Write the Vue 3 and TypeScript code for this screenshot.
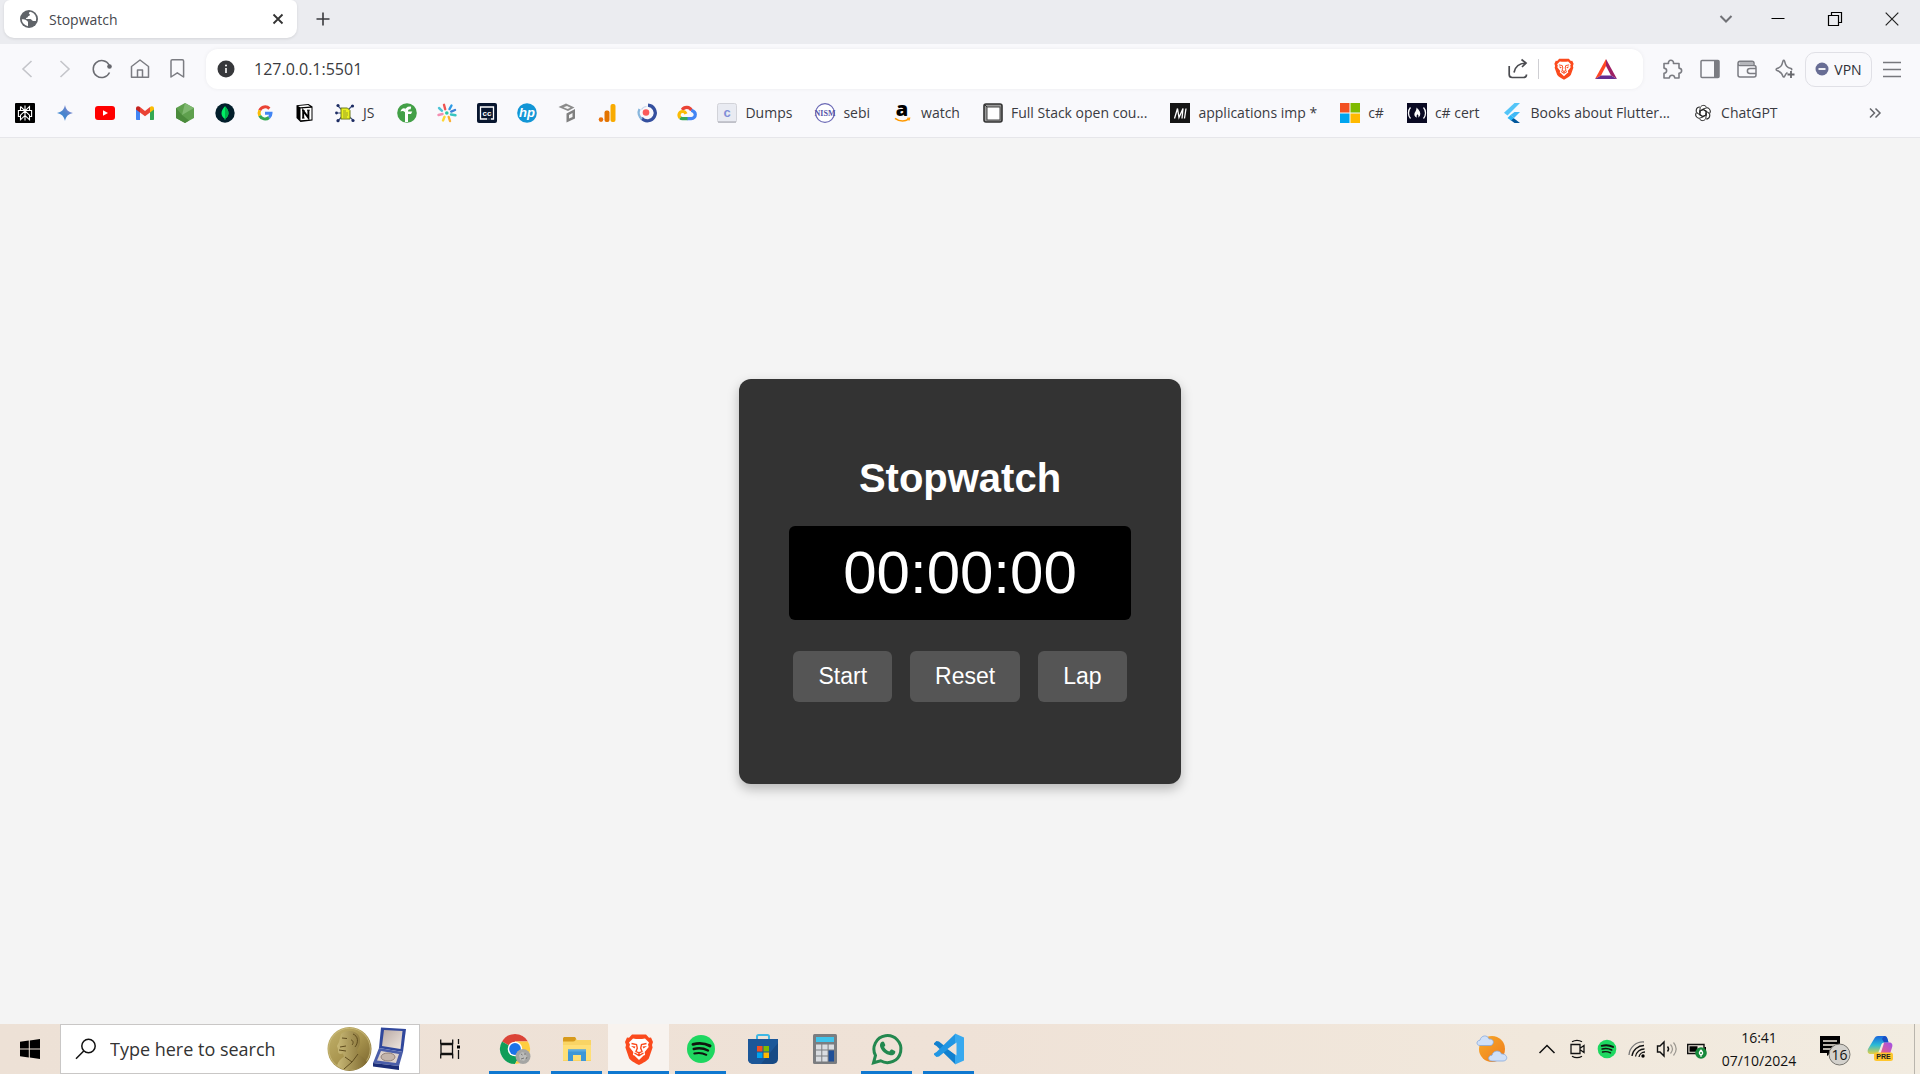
<script setup lang="ts">
import { computed, onBeforeUnmount, ref } from 'vue'

interface Bookmark {
  icon: string
  label?: string
  name: string
}

interface TaskApp {
  icon: string
  name: string
  running: boolean
  active?: boolean
}

const svg: Record<string, string> = {
  perplexity:
    '<rect width="20" height="20" rx="1" fill="#000"/><g fill="none" stroke="#fff" stroke-width="1.1"><path d="M10 2.5v15M5.5 3.5V7.5H14.5V3.5L10 7.8 5.5 3.5M10 7.8l-4.5 4.4v4.6L10 12.4l4.5 4.4v-4.6L10 7.8M5.5 7.5H3.4v6h2.1M14.5 7.5h2.1v6h-2.1"/></g>',
  gemini:
    '<defs><linearGradient id="gm" x1="0" y1="1" x2="1" y2="0"><stop offset="0" stop-color="#2f8fd8"/><stop offset=".5" stop-color="#4d84cc"/><stop offset="1" stop-color="#a18bd0"/></linearGradient></defs><path d="M10 2c.8 4.500 3.500 7.200 8 8-4.500.8-7.200 3.500-8 8-.8-4.500-3.500-7.200-8-8 4.500-.8 7.200-3.500 8-8z" fill="url(#gm)"/>',
  youtube: '<rect y="3" width="20" height="14" rx="3" fill="#f00"/><path d="M8 7.2v5.6l5-2.8z" fill="#fff"/>',
  gmail:
    '<path d="M1 5.500V16c0 .6.400 1 1 1h3V8z" fill="#4285f4"/><path d="M15 8v9h3c.6 0 1-.4 1-1V5.500z" fill="#34a853"/><path d="M1 5.500C1 3 3.500 2.600 5 4v5.500L1 6.600z" fill="#c5221f"/><path d="M5 4l5 4 5-4v5.500l-5 3.800-5-3.800z" fill="#ea4335"/><path d="M15 4c1.500-1.400 4-1 4 1.500v1.100L15 9.500z" fill="#fbbc04"/>',
  node: '<path d="M10 0l9 5v10l-9 5-9-5V5z" fill="#5fa04e"/><path d="M10 0l9 5-12 7z" fill="#7fb870"/><path d="M7 12L1 5v10l9 5 4-2.5z" fill="#4b8b3c"/>',
  mongo:
    '<circle cx="10" cy="10" r="9.7" fill="#021e2b"/><path d="M10 3.2c2.300 2.300 3.600 4.400 3.500 7-.1 2.500-1.500 4.300-3.200 5.600V17h-.6v-1.200c-1.800-1.300-3.200-3.100-3.200-5.600 0-2.600 1.300-4.700 3.500-7z" fill="#00ed64"/><path d="M10 3.2c2.300 2.300 3.600 4.400 3.500 7-.1 2.500-1.500 4.300-3.500 5.600z" fill="#00b24a"/>',
  google:
    '<g fill="none" stroke-width="3"><path d="M14.400 5.600A6 6 0 0 0 4.700 7.300" stroke="#ea4335"/><path d="M4.700 7.300a6 6 0 0 0 0 5.400" stroke="#fbbc05"/><path d="M4.700 12.700a6 6 0 0 0 9.300 1.800" stroke="#34a853"/><path d="M14 14.500a5.800 5.800 0 0 0 2-4.300h-6" stroke="#4285f4"/></g>',
  notion:
    '<path d="M1.500 2.200L13.500 1l4 2.600v14L5.500 19l-4-4z" fill="#000"/><path d="M3 2.900l10-.9 2.300 1.500-10 .8z" fill="#fff"/><path d="M5.500 5.600l11-.8v11.600l-11 .9z" fill="#fff"/><path d="M8.200 15V7.700l5.200 7.200V7.300" fill="none" stroke="#000" stroke-width="1.9"/><path d="M7 7.600h2.600M7 15.100h2.500M12 7.200h2.800" stroke="#000"/>',
  jsnet:
    '<g stroke="#3c4f80" stroke-width="1.200"><path d="M10 10L3 3M10 10l7-7M10 10H1M10 10l-7 8M10 10l8 7"/></g><g fill="#1c2b62"><circle cx="3" cy="2.500" r="1.600"/><circle cx="17.500" cy="3" r="1.600"/><circle cx="1.500" cy="10" r="1.400"/><circle cx="3" cy="17.700" r="1.600"/><circle cx="18" cy="17.500" r="1.600"/></g><path d="M6 5h6.500L15 7.500V16H6z" fill="#eaf01e" stroke="#6d7b1d"/><path d="M8 8h3M8 10h5M8 12h5M8 14h4" stroke="#9aa12a"/>',
  leafCircle:
    '<circle cx="10" cy="10" r="9.800" fill="#43a047"/><path d="M8 19V9c0-3.800 2-5.800 6.200-5.300l-.6 2.700c-1.700-.3-2.600.4-2.600 2.100h4.300L14 11h-3v8z" fill="#fff"/><path d="M3.500 8.500C4 5.500 6.500 4.300 9 5.800L8 9.200C6.500 7.800 5 7.700 3.500 8.500z" fill="#fff"/>',
  burst:
    '<g stroke-width="2.400" stroke-linecap="round"><path d="M7 1.800l1.200 4.400" stroke="#ef5350"/><path d="M14.500 2.500l-2 3.600" stroke="#2e9be6"/><path d="M14.200 8.600l3.800-1.600" stroke="#3b7fd6"/><path d="M14 11.500l4.500.8" stroke="#36c5c0"/><path d="M11.700 14l1.300 4" stroke="#fbb034"/><path d="M7.500 13.800L6 17.500" stroke="#fdd835"/><path d="M5.500 11l-4 1" stroke="#f48fb1"/><path d="M5 7.800L2 5" stroke="#4dc4d6"/></g><circle cx="9.800" cy="10" r="1.800" fill="#2ec7a6"/>',
  cc: '<rect width="20" height="20" rx="2" fill="#08162f"/><path d="M3.500 4h13v12h-13z" fill="none" stroke="#fff" stroke-width="1.300"/><path d="M10 16h4" stroke="#08162f" stroke-width="1.600"/><text x="10" y="12.500" text-anchor="middle" font-family="Liberation Sans, sans-serif" font-weight="700" font-size="8" fill="#fff">cc</text>',
  hp: '<circle cx="10" cy="10" r="9.800" fill="#1296d6"/><text x="10" y="14" text-anchor="middle" font-family="Liberation Sans, sans-serif" font-style="italic" font-weight="700" font-size="13" fill="#fff">hp</text>',
  blocks:
    '<path d="M1.500 4L9 .5l8.500 4L11 8z" fill="#8c8c8c"/><path d="M6.500 4.200L10 3l3.500 1.700L10.500 6z" fill="#f4f4f4"/><path d="M9.500 10.500L18 6v9.500l-8.500 4z" fill="#808080"/><path d="M12 12l3.500-2v4L12 15.500z" fill="#f4f4f4"/>',
  analytics:
    '<rect x="13.500" y="1" width="5" height="18" rx="2" fill="#f9ab00"/><rect x="7.500" y="7.500" width="5" height="11.500" rx="2" fill="#e37400"/><circle cx="4" cy="16.600" r="2.300" fill="#e8710a"/>',
  swirl:
    '<circle cx="9" cy="9.500" r="3.300" fill="#fb5b5b"/><path d="M11 2.200A7.800 7.800 0 1 1 4.500 15" fill="none" stroke="#35509f" stroke-width="3.200"/><path d="M5 16A8 8 0 0 1 2.500 6" fill="none" stroke="#89b7dd" stroke-width="2.400"/><path d="M4.500 6.500a6 6 0 0 1 5-3" fill="none" stroke="#c6d4ea" stroke-width="1.200"/>',
  cloud:
    '<g fill="none" stroke-width="3.200"><path d="M5.200 6.800a5.300 5.300 0 0 1 9.300.6" stroke="#ea4335"/><path d="M14.300 7.200c2.600.8 4 2.400 4 4.300a4 4 0 0 1-4 4.100H10" stroke="#4285f4"/><path d="M10.500 15.600H5.500c-1 0-1.800-.3-2.400-.8" stroke="#34a853"/><path d="M3.100 14.800c-2.300-2.500-.6-6.300 2.400-6.300 1.600 0 3 1 3.500 2.400" stroke="#fbbc05"/></g>',
  dumps:
    '<rect x=".5" y=".5" width="19" height="19" rx="2" fill="#e9ebf2" stroke="#d2d3d9"/><path d="M1 19h18" stroke="#b9bac2" stroke-width="1.500"/><text x="10" y="14" text-anchor="middle" font-family="Liberation Sans, sans-serif" font-weight="700" font-size="13" fill="#7f8ed8">c</text>',
  nism: '<circle cx="10" cy="10" r="9.400" fill="#fff" stroke="#6a68b5" stroke-width="1.100"/><text x="10" y="13" text-anchor="middle" font-family="Liberation Serif, serif" font-weight="700" font-size="8" fill="#5653a8">NISM</text>',
  amazon:
    '<text x="9" y="13" text-anchor="middle" font-family="Open Sans, sans-serif" font-weight="800" font-size="20" fill="#000">a</text><path d="M2 15.300c4.500 3.200 10 3.200 14 .6" fill="none" stroke="#f90" stroke-width="1.600"/><path d="M14 15.200l2.700-.2-.8 2.600" fill="none" stroke="#f90" stroke-width="1.100"/>',
  fullstack:
    '<rect x="1" y="1" width="18" height="18" rx="2" fill="#9a9a9a" stroke="#333" stroke-width="1.600"/><rect x="4" y="4" width="13" height="13" fill="#fff" stroke="#444" stroke-width="1"/><path d="M1.500 1.500L4 4" stroke="#333"/>',
  appsM:
    '<rect width="20" height="20" fill="#151515"/><path d="M4.500 15.500L7.500 5.500l1.500 9L13 5.500l-1 10M14.500 15.500L16 5.500" fill="none" stroke="#fff" stroke-width="1.300"/>',
  microsoft:
    '<path d="M0 0h9.500v9.500H0z" fill="#f25022"/><path d="M10.500 0H20v9.500h-9.500z" fill="#7fba00"/><path d="M0 10.500h9.500V20H0z" fill="#00a4ef"/><path d="M10.500 10.500H20V20h-9.500z" fill="#ffb900"/>',
  fcc: '<rect width="20" height="20" fill="#0a0a23"/><path d="M3.500 4.500c-2.700 3-2.700 8 0 11M16.500 4.500c2.700 3 2.700 8 0 11" fill="none" stroke="#fff" stroke-width="1.300"/><path d="M9.500 4.500c3 2.600 4.500 5.200 3.500 8-.5 1.200-1.200 1.700-2 2 .8-1.200.6-2.300-.6-3.300-.8 1-1.100 2.100-.4 3.300-2.700-.7-3.200-3.300-2-5.300.9-1.500 1.500-2.600 1.500-4.700z" fill="#fff"/>',
  flutter:
    '<path d="M11.500 0h5.500L4.500 12.600 1 9.700z" fill="#54c5f8"/><path d="M11.500 9H17l-6 6-3.500-3z" fill="#40b8f5"/><path d="M10.500 15L17 20h-5.500l-4-3z" fill="#01579b"/><path d="M7.500 12l3.500 3-3 2.500L4.500 15z" fill="#29b6f6"/>',
  openai:
    '<circle cx="10" cy="10" r="7" fill="#fff"/><g fill="none" stroke="#2a2a2a" stroke-width="1"><path id="oa" d="M7 10V6c0-4 5-4.800 6.600-1.700M7 8.300l3.300-1.900 3.700 2.100"/><use href="#oa" transform="rotate(60 10 10)"/><use href="#oa" transform="rotate(120 10 10)"/><use href="#oa" transform="rotate(180 10 10)"/><use href="#oa" transform="rotate(240 10 10)"/><use href="#oa" transform="rotate(300 10 10)"/></g>',
  chrome:
    '<circle cx="16" cy="16" r="15" fill="#fff"/><path d="M16 16L3 8.500A15 15 0 0 1 29 8.500H16z" fill="#db4437"/><path d="M16 16L3 8.500A15 15 0 0 0 16 31l6.500-11.500z" fill="#0f9d58"/><path d="M16 8.500h13A15 15 0 0 1 16 31l6.500-11.500z" fill="#ffcd40"/><circle cx="16" cy="16" r="7.300" fill="#fff"/><circle cx="16" cy="16" r="5.900" fill="#1a73e8"/><circle cx="24" cy="23.500" r="7.500" fill="#a5a5a3"/><path d="M20 22l3-3 3 1 2 4-3 4-4-1z" fill="#bcbcb9"/><path d="M22 21l1.500 1M26 20v2M22 26l3-1M27 26l1-2" stroke="#777"/>',
  explorer:
    '<path d="M2 6c0-1.500.8-2 2-2h9c1 0 1.500.5 2 1.500L16 7H30v21H2z" fill="#f9d464"/><path d="M2 6c0-1.500.8-2 2-2h9c1 0 1.500.5 2 1.500-.3 2-1 3-3 3H2z" fill="#d79a1d"/><path d="M4 12h26v15H2V12z" fill="#ffdf76"/><path d="M7 16.500h18V28h-5v-6h-8v6H7z" fill="#3e97d7"/><path d="M7 16.500h18v2H7z" fill="#5aaae2"/>',
  brave:
    '<path d="M9 1.500h14l3 3.300 2-.2L30 9l-1 3 .6 2.500L26 25c-1 2.500-6 5-10 7-4-2-9-4.500-10-7L2.400 14.500 3 12 2 9l2-4.400 2 .2z" fill="#fb4a1d"/><path d="M10 5.500l3 .6h6l3-.6 4 4-1 2 .7 2.500-4 5 .4 3-1.500.6L16 27l-4.600-4.400-1.500-.6.4-3-4-5L7 11.500l-1-2z" fill="#fff"/><path d="M8.500 10.500l5 1 .8 3.600-1.300 3.400 3 1.500 3-1.500-1.300-3.400.8-3.600 5-1M16 19.500V23M11.500 20L16 22.700l4.500-2.700" fill="none" stroke="#fb4a1d" stroke-width="1.400"/><path d="M8 13l4.500.6-1 2zM24 13l-4.500.6 1 2z" fill="#fb4a1d"/>',
  spotify:
    '<circle cx="16" cy="16" r="14" fill="#1ed760"/><g fill="none" stroke="#10160f" stroke-linecap="round"><path d="M8 11.300c6-1.600 12-1 17 1.600" stroke-width="2.900"/><path d="M8.700 16c5-1.300 10-.8 14.300 1.500" stroke-width="2.400"/><path d="M9.300 20.500c4.200-1.100 8.300-.7 12 1.300" stroke-width="2"/></g>',
  store:
    '<path d="M10 8V3.500C10 2.500 10.500 2 11.500 2h9c1 0 1.500.5 1.500 1.500V8" fill="none" stroke="#3fb7e4" stroke-width="2"/><path d="M1 6h30v20a5 5 0 0 1-5 5H6a5 5 0 0 1-5-5z" fill="#174a85"/><path d="M1 6h30v4L14 31H6a5 5 0 0 1-5-5z" fill="#1b5799"/><path d="M10 13h5.500v5.500H10z" fill="#f25022"/><path d="M16.500 13H22v5.500h-5.500z" fill="#7fba00"/><path d="M10 19.500h5.500V25H10z" fill="#00a4ef"/><path d="M16.500 19.500H22V25h-5.500z" fill="#ffb900"/>',
  calc: '<rect x="4" y="1" width="24" height="30" rx="1.500" fill="#7b7d80"/><path d="M7 4h18v5H7z" fill="#3fc4ec"/><g fill="#dadde1"><path d="M7 11.500h5.300v5H7zM13.300 11.500h5.300v5h-5.300zM19.600 11.500H25v5h-5.400zM7 17.500h5.300v5H7zM13.300 17.500h5.300v5h-5.300zM7 23.500h5.300v5H7zM13.300 23.500h5.300v5h-5.300z"/></g><path d="M19.600 17.500H25v11h-5.400z" fill="#1f4f97"/>',
  whatsapp:
    '<path d="M2.500 29.800l2-7.300A13.500 13.500 0 1 1 9.600 27.800z" fill="none" stroke="#23884f" stroke-width="3"/><path d="M10.500 9c1-.9 2.200-.8 2.600.2l1.100 2.600c.3.600-.2 1.200-1.100 2.200 1.200 2.300 2.800 3.700 5.200 4.600l1.500-1.800c.4-.4.8-.5 1.300-.2l2.800 1.400c.5.300.5 1 .2 1.900-.6 1.700-2.700 2.700-4.600 2.400-5-.8-9.300-4.700-10.400-8.800-.4-1.800.2-3.500 1.400-4.500z" fill="#23884f"/>',
  vscode:
    '<path d="M22 31L3.500 13 1 11.500v-1.300L3.500 8 6 8.500 24 23z" fill="#1180cf"/><path d="M22 1L3.500 19 1 20.500v1.300L3.500 24 6 23.500 24 9z" fill="#2196e3"/><path d="M22 .5l9 4v23l-9 4z" fill="#38a9ef"/><path d="M23.500 9.500v13L14.500 16z" fill="#efe3d8"/>',
}

const bookmarks: Bookmark[] = [
  { icon: 'perplexity', name: 'Perplexity' },
  { icon: 'gemini', name: 'Gemini' },
  { icon: 'youtube', name: 'YouTube' },
  { icon: 'gmail', name: 'Gmail' },
  { icon: 'node', name: 'Node.js' },
  { icon: 'mongo', name: 'MongoDB' },
  { icon: 'google', name: 'Google' },
  { icon: 'notion', name: 'Notion' },
  { icon: 'jsnet', name: 'JS', label: 'JS' },
  { icon: 'leafCircle', name: 'Freelance' },
  { icon: 'burst', name: 'Burst' },
  { icon: 'cc', name: 'Courses' },
  { icon: 'hp', name: 'HP' },
  { icon: 'blocks', name: 'Blocks' },
  { icon: 'analytics', name: 'Analytics' },
  { icon: 'swirl', name: 'Swirl' },
  { icon: 'cloud', name: 'Cloud' },
  { icon: 'dumps', name: 'Dumps', label: 'Dumps' },
  { icon: 'nism', name: 'sebi', label: 'sebi' },
  { icon: 'amazon', name: 'watch', label: 'watch' },
  { icon: 'fullstack', name: 'Full Stack', label: 'Full Stack open cou...' },
  { icon: 'appsM', name: 'applications', label: 'applications imp *' },
  { icon: 'microsoft', name: 'c#', label: 'c#' },
  { icon: 'fcc', name: 'c# cert', label: 'c# cert' },
  { icon: 'flutter', name: 'Flutter', label: 'Books about Flutter...' },
  { icon: 'openai', name: 'ChatGPT', label: 'ChatGPT' },
]

const apps: TaskApp[] = [
  { icon: 'chrome', name: 'Chrome', running: true },
  { icon: 'explorer', name: 'File Explorer', running: true },
  { icon: 'brave', name: 'Brave', running: true, active: true },
  { icon: 'spotify', name: 'Spotify', running: true },
  { icon: 'store', name: 'Store', running: false },
  { icon: 'calc', name: 'Calculator', running: false },
  { icon: 'whatsapp', name: 'WhatsApp', running: true },
  { icon: 'vscode', name: 'VS Code', running: true },
]

const address = ref('127.0.0.1:5501')
const query = ref('')

const elapsed = ref(0)
const laps = ref<string[]>([])
const running = ref(false)
let timer: number | undefined

const pad = (n: number): string => String(n).padStart(2, '0')
const display = computed(() => {
  const s = elapsed.value
  return `${pad(Math.floor(s / 3600))}:${pad(Math.floor(s / 60) % 60)}:${pad(s % 60)}`
})

function toggle(): void {
  running.value = !running.value
  if (running.value) timer = window.setInterval(() => elapsed.value++, 1000)
  else window.clearInterval(timer)
}

function reset(): void {
  window.clearInterval(timer)
  running.value = false
  elapsed.value = 0
  laps.value = []
}

function lap(): void {
  if (running.value) laps.value.push(display.value)
}

onBeforeUnmount(() => window.clearInterval(timer))
</script>

<template>
  <div class="desktop">
    <header class="browser">
      <div class="tabstrip">
        <div class="tab">
          <svg width="18" height="18" viewBox="0 0 18 18"><circle cx="9" cy="9" r="9" fill="#5f6368" /><path d="M10.500 1.800c-2 .7-2 1.700-1 2.200.8.500.3 1.700-.8 2-1 .2-.5 1.500-2 1.700-1 .2-1 1.300.2 1.400h3.300c1.500 0 1.500 1.900 2.900 1.900h2.800a7.200 7.200 0 0 0-5.400-9.200zM1.800 9.200c2.200.1 3.700 0 4.500 1 .9 1 1.700.8 1.700 2v4A7.200 7.200 0 0 1 1.800 9.200z" fill="#fff" /></svg>
          <span class="tab-title">Stopwatch</span>
          <button class="bare" aria-label="Close tab"><svg width="12" height="12" viewBox="0 0 12 12"><path d="M1.500 1.500l9 9M10.500 1.500l-9 9" stroke="#333" stroke-width="1.800" /></svg></button>
        </div>
        <button class="bare new-tab" aria-label="New tab"><svg width="14" height="14" viewBox="0 0 14 14"><path d="M7 .5v13M.5 7h13" stroke="#3a3a3e" stroke-width="1.600" /></svg></button>
        <button class="bare tab-search" aria-label="Search tabs"><svg width="14" height="14" viewBox="0 0 14 14"><path d="M1.500 4L7 9.500 12.500 4" fill="none" stroke="#707176" stroke-width="2" /></svg></button>
        <button class="bare win" aria-label="Minimise"><svg width="14" height="14" viewBox="0 0 14 14"><path d="M.5 6.500h13" stroke="#000" /></svg></button>
        <button class="bare win" aria-label="Restore"><svg width="14" height="14" viewBox="0 0 14 14"><path d="M.5 3.500h10v10H.5zM3.500 3.500v-3h10v10h-3" fill="none" stroke="#000" stroke-width="1.200" /></svg></button>
        <button class="bare win" aria-label="Close"><svg width="14" height="14" viewBox="0 0 14 14"><path d="M.7.7l12.600 12.600M13.300.7L.7 13.300" stroke="#222" stroke-width="1.200" /></svg></button>
      </div>

      <div class="toolbar">
        <nav class="nav-icons">
          <button class="bare" aria-label="Back"><svg width="22" height="22" viewBox="0 0 22 22"><path d="M15.500 3L7 11l8.500 8" fill="none" stroke="#c4c5ca" stroke-width="1.600" /></svg></button>
          <button class="bare" aria-label="Forward"><svg width="22" height="22" viewBox="0 0 22 22"><path d="M6.500 3l8.500 8-8.500 8" fill="none" stroke="#c4c5ca" stroke-width="1.600" /></svg></button>
          <button class="bare" aria-label="Reload"><svg width="22" height="22" viewBox="0 0 22 22"><path d="M18.500 14.500a8.500 8.500 0 1 1-.3-7.500" fill="none" stroke="#6b6c72" stroke-width="1.500" /><circle cx="18.500" cy="8.500" r="2.300" fill="#66676d" /></svg></button>
          <button class="bare" aria-label="Home"><svg width="22" height="22" viewBox="0 0 22 22"><path d="M2.500 8.500L11 2l8.500 6.500v10.700h-17zM8.500 19v-7h5v7" fill="none" stroke="#7b7c82" stroke-width="1.500" stroke-linejoin="round" /></svg></button>
          <button class="bare" aria-label="Bookmark"><svg width="22" height="22" viewBox="0 0 22 22"><path d="M5 3c0-.8.5-1.300 1.300-1.300h10c.8 0 1.300.5 1.300 1.300v16l-6.300-4.200L5 19z" fill="none" stroke="#7b7c82" stroke-width="1.500" stroke-linejoin="round" /></svg></button>
        </nav>

        <div class="address">
          <svg width="18" height="18" viewBox="0 0 18 18"><circle cx="9" cy="9" r="8.500" fill="#37383b" /><path d="M9 8v5" stroke="#fff" stroke-width="1.600" /><circle cx="9" cy="5.500" r="1" fill="#fff" /></svg>
          <input v-model="address" class="url" aria-label="Address" />
          <button class="bare" aria-label="Share"><svg width="22" height="22" viewBox="0 0 22 22"><path d="M2.200 8v8.500c0 2 1 3 3 3h11.300c2 0 3-1 3-3M7 14.500C8 9 11 5.500 18.500 5M14.500 1.500L19 5l-4 4" fill="none" stroke="#4a4b50" stroke-width="1.700" /></svg></button>
          <span class="divider"></span>
          <button class="bare shield" aria-label="Shields"><svg width="22" height="24" viewBox="0 0 32 33" v-html="svg.brave"></svg></button>
          <button class="bare" aria-label="Rewards"><svg width="22" height="20" viewBox="0 0 22 20"><path d="M11 0L0 20l6-3.600L11 7z" fill="#ff4724" /><path d="M11 0l11 20-6-3.600L11 7z" fill="#9e1f63" /><path d="M0 20h22l-6-3.600H6z" fill="#662d91" /></svg></button>
        </div>

        <div class="tool-icons">
          <button class="bare" aria-label="Extensions"><svg width="22" height="22" viewBox="0 0 22 22"><path d="M3 5.500h4.500c-1-4 5.500-4.500 5 0H18v4.600c3.500.5 3.500 4.800 0 5.200V20h-4.200c-.5-3.600-5-3.600-5.500 0H3v-4.700c3.500-.4 3.500-4.700 0-5.200z" fill="none" stroke="#7b7c82" stroke-width="1.600" stroke-linejoin="round" /></svg></button>
          <button class="bare" aria-label="Side panel"><svg width="22" height="22" viewBox="0 0 22 22"><rect x="2" y="2.500" width="18" height="17" rx="1" fill="none" stroke="#7b7c82" stroke-width="1.500" /><path d="M15 2.500h5v17h-5z" fill="#7b7c82" /></svg></button>
          <button class="bare" aria-label="Wallet"><svg width="22" height="22" viewBox="0 0 22 22"><path d="M2 5.500V17c0 1.200.8 2 2 2h14c1.200 0 2-.8 2-2V9.500c0-1.200-.8-2-2-2H4c-1.200 0-2-.6-2-2s.8-2.300 2-2.300h12c1.200 0 2 .8 2 2v2.300M20 10.500h-6c-3.500 0-3.500 5 0 5h6" fill="none" stroke="#7b7c82" stroke-width="1.500" /><path d="M3 4h14v3H4z" fill="#b5b6bb" /></svg></button>
          <button class="bare" aria-label="Leo"><svg width="22" height="22" viewBox="0 0 22 22"><path d="M13.500 14.500c-1.500.8-2.200 2-3 4-.6.8-1.200.8-1.500 0-1.200-3.500-2.200-4.800-6-6-1.200-.5-1.200-1.500 0-2 3.800-1.300 4.800-2.500 6-7.500.3-1 1.200-1 1.500 0 1.200 5 2.500 6.200 6.500 7.500 1 .5 1 1 .3 1.700" fill="none" stroke="#7b7c82" stroke-width="1.500" /><path d="M17 13v7M13.500 16.500h7" stroke="#66676c" stroke-width="1.800" /></svg></button>
        </div>
        <button class="vpn"><svg width="14" height="14" viewBox="0 0 14 14"><circle cx="7" cy="7" r="6.500" fill="#686d94" /><path d="M3.500 7h7" stroke="#fff" stroke-width="1.800" /></svg>VPN</button>
        <button class="bare" aria-label="Menu"><svg width="22" height="22" viewBox="0 0 22 22"><path d="M2 4.500h18M2 11.500h18M2 18.500h18" stroke="#77787d" stroke-width="1.500" /></svg></button>
      </div>

      <nav class="bookmarks" aria-label="Bookmarks">
        <a v-for="b in bookmarks" :key="b.icon" href="#" class="bookmark" :class="{ labelled: b.label }" :aria-label="b.name">
          <svg width="20" height="20" viewBox="0 0 20 20" v-html="svg[b.icon]"></svg>
          <span v-if="b.label">{{ b.label }}</span>
        </a>
        <button class="bare more" aria-label="More bookmarks"><svg width="12" height="12" viewBox="0 0 12 12"><path d="M1 1.500L5.500 6 1 10.500M6.500 1.500L11 6l-4.500 4.500" fill="none" stroke="#66676c" stroke-width="1.500" /></svg></button>
      </nav>
    </header>

    <main class="page">
      <section class="card">
        <h1>Stopwatch</h1>
        <div class="display">{{ display }}</div>
        <div class="controls">
          <button @click="toggle">{{ running ? 'Stop' : 'Start' }}</button>
          <button @click="reset">Reset</button>
          <button @click="lap">Lap</button>
        </div>
        <ul class="laps">
          <li v-for="(l, i) in laps" :key="i">{{ l }}</li>
        </ul>
      </section>
    </main>

    <footer class="taskbar">
      <button class="bare start" aria-label="Start menu"><svg width="20" height="20" viewBox="0 0 20 20"><path d="M0 2.800L8.800 1.600V9.500H0zM9.800 1.500L20 0v9.500H9.800zM0 10.500h8.800v7.900L0 17.200zM9.800 10.500H20V20L9.800 18.500z" /></svg></button>
      <label class="search">
        <svg width="22" height="22" viewBox="0 0 22 22"><circle cx="13.500" cy="8" r="6.700" fill="none" stroke="#111" stroke-width="1.500" /><path d="M8.700 13L1 20.700" stroke="#111" stroke-width="1.500" /></svg>
        <input v-model="query" placeholder="Type here to search" aria-label="Type here to search" />
        <svg width="80" height="46" viewBox="0 0 80 46">
          <defs>
            <linearGradient id="gold" x1="0" y1="0" x2="1" y2="1"><stop offset="0" stop-color="#c3b36c" /><stop offset=".5" stop-color="#a9954f" /><stop offset="1" stop-color="#75602a" /></linearGradient>
            <linearGradient id="face" x1="0" y1="0" x2="1" y2="0"><stop offset="0" stop-color="#c9b977" /><stop offset="1" stop-color="#7f6a30" /></linearGradient>
            <linearGradient id="satin" x1="0" y1="0" x2="1" y2="1"><stop offset="0" stop-color="#b9a9a4" /><stop offset="1" stop-color="#efe6df" /></linearGradient>
          </defs>
          <circle cx="22.500" cy="23" r="22" fill="url(#gold)" />
          <circle cx="22.500" cy="23" r="20.800" fill="none" stroke="#cbbd7f" stroke-width=".8" />
          <path d="M14 8c5-4.500 15-4 18 2 2 5 1 10-2 14l1 5c4 1 7 4 9 7-3 5-10 8-17 8-6 0-10-2-13-4.500 1-4 4-7 7-9l-1-3c-3 1-5 0-5-2.500v-2l-1-3 2-4z" fill="url(#face)" />
          <path d="M26 8c5 2 6 8 2 13M15 12l5 .5M13 21l6-1M12 24l7 1M18 31l7 5 6-8M25 36l-8 7M24 14c2 0 3 3 1 5" fill="none" stroke="#5f4c1e" stroke-width="1" />
          <path d="M54 1.500L79 3l-3 23-24-4z" fill="#30479c" /><path d="M57 4l18.500 1-2 18L55 20z" fill="url(#satin)" />
          <path d="M52 22l24 4-4 14-26-3z" fill="#4a5da8" /><path d="M54 25l18 3-3 9-19-2.500z" fill="#ddd2cd" /><ellipse cx="61" cy="31" rx="7" ry="4" fill="#c3b4ab" stroke="#93827a" /><path d="M46 37l26 3v4l-26-3.500z" fill="#1c2e78" />
        </svg>
      </label>
      <button class="bare taskview" aria-label="Task view"><svg width="20" height="20" viewBox="0 0 20 20"><path d="M.7.5v4h12v-4M.7 19.500v-4h12v4M1 5.500h11.500v9H1zM18.500 0v5M18.500 11v9" fill="none" stroke="#111" stroke-width="1.300" /><path d="M17 6.500h3v3h-3z" /></svg></button>

      <nav class="apps" aria-label="Apps">
        <button v-for="a in apps" :key="a.icon" class="app" :class="{ running: a.running, active: a.active }" :aria-label="a.name">
          <svg width="32" height="32" viewBox="0 0 32 32" v-html="svg[a.icon]"></svg>
        </button>
      </nav>

      <div class="tray">
        <button class="bare weather" aria-label="Weather">
          <svg width="32" height="30" viewBox="0 0 32 30"><defs><linearGradient id="sun" x1="0" y1="0" x2="1" y2="1"><stop offset="0" stop-color="#f7a928" /><stop offset="1" stop-color="#ef7c1c" /></linearGradient></defs><circle cx="16" cy="15" r="13" fill="url(#sun)" /><path d="M4 11.500c-4 0-4-5 0-5.300C5 1 11.500.5 13 5c4-.5 5 3 4 4.500-.5 1.300-1.500 2-3 2z" fill="#cfe0f8" stroke="#88a9dd" stroke-width=".8" /><path d="M16 27c-4.500 0-4.500-5.500 0-5.800 1-5 8-5.700 9.500-1.200 4-.5 6 3 5 5-.6 1.300-1.800 2-3.500 2z" fill="#cfe0f8" stroke="#88a9dd" stroke-width=".8" /></svg>
        </button>
        <button class="bare tray-btn" aria-label="Hidden icons"><svg width="18" height="18" viewBox="0 0 18 18"><path d="M1.500 13L9 5.500l7.500 7.500" fill="none" stroke="#111" stroke-width="1.500" /></svg></button>
        <button class="bare tray-btn" aria-label="Camera"><svg width="18" height="20" viewBox="0 0 18 20"><path d="M3 5.500h9v9H3zM12.500 9l3.500-2.500v7L12.500 11M4 2.700c3-1.700 7-1.700 10 0M4 17.300c3 1.700 7 1.700 10 0" fill="none" stroke="#111" stroke-width="1.300" /></svg></button>
        <button class="bare tray-btn" aria-label="Spotify"><svg width="20" height="20" viewBox="1 1 30 30" v-html="svg.spotify"></svg></button>
        <button class="bare tray-btn" aria-label="Wi-Fi"><svg width="18" height="18" viewBox="0 0 18 18"><g fill="none" stroke="#111" stroke-width="1.300"><path d="M1 15A14 14 0 0 1 16 2" stroke="#777" /><path d="M4 16A12 12 0 0 1 16 5.500M7.500 16.500A9 9 0 0 1 16.500 9M11 17a6 6 0 0 1 6-5" /></g><circle cx="15" cy="16" r="1.700" /></svg></button>
        <button class="bare tray-btn" aria-label="Volume"><svg width="22" height="18" viewBox="0 0 22 18"><path d="M1.500 6H4l4-4v14l-4-4H1.500zM11.500 6.500c1.300 1.500 1.300 3.500 0 5" fill="none" stroke="#111" stroke-width="1.400" /><path d="M14.500 4.500c2.400 2.700 2.400 6.300 0 9M17.500 2.500c3.300 4 3.300 9 0 13" fill="none" stroke="#9c9891" stroke-width="1.200" /></svg></button>
        <button class="bare tray-btn" aria-label="Battery"><svg width="20" height="20" viewBox="0 0 20 20"><path d="M.7 5.500H17v9H.7z" fill="#f2ebe0" stroke="#111" stroke-width="1.400" /><path d="M2.500 7.300h8v5.500h-8zM17.500 8h1.500v4h-1.500z" /><circle cx="14" cy="14" r="5.800" fill="#15893a" /><path d="M14 10.200c3 2.500 3 5.500 0 6.300-3-.8-3-3.800 0-6.300z" fill="#fff" /><path d="M14 13v5" stroke="#fff" /><circle cx="14" cy="14" r="1" fill="#15893a" /></svg></button>
        <div class="clock"><time>16:41</time><time>07/10/2024</time></div>
        <button class="bare notes" aria-label="Notifications">
          <svg width="34" height="32" viewBox="0 0 34 32"><path d="M2 3h20v17h-9l-4 3v-3H2z" /><path d="M5 8h14M5 12h14M5 16h8" stroke="#f2ebe0" stroke-width="1.500" /><circle cx="21.500" cy="21.500" r="10.500" fill="#d3d1cc" stroke="#77756f" /><text x="21.500" y="26.500" text-anchor="middle" font-family="Open Sans, sans-serif" font-size="14" fill="#111">16</text></svg>
        </button>
        <button class="bare copilot" aria-label="Copilot">
          <svg width="28" height="28" viewBox="0 0 28 28"><defs><linearGradient id="cpa" x1="0" y1="0" x2="0" y2="1"><stop offset="0" stop-color="#1a66dd" /><stop offset=".5" stop-color="#2bbbd6" /><stop offset="1" stop-color="#e2d044" /></linearGradient><linearGradient id="cpb" x1="1" y1="0" x2="0" y2="1"><stop offset="0" stop-color="#a04fe8" /><stop offset="1" stop-color="#f5637c" /></linearGradient></defs><path d="M8 4c1-2 2-3 4-3h6c2 0 3 1 3.500 3l1 3.500h-4c-2 0-3 1-3.500 3L13 16c-1 2.500-2 3-4 3H5C2 19 1 17 2 14z" fill="url(#cpa)" /><path d="M18 1c2 0 3 1 3.500 3l1 3.500H18L16 4z" fill="#174fc4" /><path d="M18 7.500h5c3 0 4 2 3 5l-2.500 8H14l3.500-11z" fill="url(#cpb)" /><rect x="8" y="17.500" width="19" height="8.500" rx="2.500" fill="#ffc62d" /><text x="17.500" y="24.200" text-anchor="middle" font-family="Liberation Sans, sans-serif" font-weight="700" font-size="7" fill="#222">PRE</text></svg>
        </button>
        <span class="peek"></span>
      </div>
    </footer>
  </div>
</template>

<style>
body {
  margin: 0;
}
</style>

<style scoped>
.desktop {
  display: flex;
  flex-direction: column;
  min-height: 100vh;
  background: #f4f4f4;
  color: #2e2f36;
  font-family: 'Open Sans', 'Noto Sans', sans-serif;
  font-size: 14px;
}

button,
input {
  font: inherit;
  color: inherit;
}

.bare {
  display: flex;
  align-items: center;
  justify-content: center;
  padding: 0;
  border: 0;
  background: none;
}

svg {
  display: block;
  flex: none;
  overflow: visible;
}

/* Browser chrome */
.browser {
  background: #f9f9fc;
  border-bottom: 1px solid #e6e6ea;
}

.tabstrip {
  display: flex;
  height: 44px;
  padding-left: 4px;
  background: #ebecf0;
}

.tab {
  display: flex;
  align-items: center;
  box-sizing: border-box;
  width: 293px;
  height: 38px;
  padding: 0 13px 0 16px;
  border-radius: 6px 6px 10px 10px;
  background: #fff;
  box-shadow: 0 1px 3px rgba(0, 0, 0, 0.1);
}

.tab-title {
  flex: 1;
  padding-left: 11px;
  color: #47484e;
}

.new-tab {
  width: 52px;
  height: 38px;
}

.tab-search {
  width: 46px;
  height: 38px;
  margin-left: auto;
}

.win {
  width: 57px;
  height: 37px;
}

.toolbar {
  display: flex;
  align-items: center;
  height: 50px;
  padding: 0 17px 0 16px;
}

.nav-icons {
  display: flex;
  justify-content: space-between;
  width: 172px;
}

.address {
  display: flex;
  flex: 1;
  align-items: center;
  height: 40px;
  margin: 0 18px;
  padding: 0 26px 0 11px;
  box-sizing: border-box;
  border-radius: 12px;
  background: #fff;
  box-shadow: 0 0 4px rgba(0, 0, 0, 0.06);
}

.url {
  flex: 1;
  min-width: 0;
  padding: 0 0 0 19px;
  border: 0;
  outline: 0;
  background: none;
  font-size: 16px;
  color: #3a3b40;
}

.divider {
  width: 1px;
  height: 20px;
  margin: 0 14px 0 9px;
  background: #cfcfd3;
}

.shield {
  margin-right: 20px;
}

.tool-icons {
  display: flex;
  justify-content: space-between;
  width: 135px;
}

.vpn {
  display: flex;
  align-items: center;
  justify-content: center;
  gap: 5px;
  box-sizing: border-box;
  width: 67px;
  height: 35px;
  margin: 0 9px;
  padding: 0;
  border: 1px solid #e0e0e6;
  border-radius: 10px;
  background: #f9f9fc;
}

.bookmarks {
  display: flex;
  align-items: center;
  gap: 20px;
  height: 43px;
  padding: 0 39px 6px 15px;
  box-sizing: border-box;
}

.bookmark {
  display: flex;
  align-items: center;
  gap: 8px;
  color: #3a3b42;
  text-decoration: none;
  white-space: nowrap;
}

.labelled {
  margin-right: 3px;
}

.more {
  margin-left: auto;
}

/* Stopwatch page */
.page {
  display: flex;
  flex: 1;
  align-items: center;
  justify-content: center;
  background: #f4f4f4;
  font-family: 'Liberation Sans', Arial, sans-serif;
}

.card {
  padding: 76px 50px 62px;
  border-radius: 12px;
  background: #333;
  box-shadow: 0 5px 12px rgba(0, 0, 0, 0.25);
  color: #fff;
  text-align: center;
}

.card h1 {
  margin: 0 0 25px;
  font-size: 40px;
  line-height: 46px;
}

.display {
  min-width: 342px;
  padding: 12px 0;
  box-sizing: border-box;
  border-radius: 6px;
  background: #000;
  font-size: 60px;
  line-height: 70px;
}

.controls {
  display: flex;
  justify-content: center;
  gap: 18px;
  margin-top: 31px;
}

.controls button {
  padding: 12px 25px;
  border: 0;
  border-radius: 6px;
  background: #555;
  font-size: 23px;
  line-height: 27px;
}

.laps {
  margin: 20px 0 0;
  padding: 0;
  list-style: none;
  font-size: 18px;
}

/* Taskbar */
.taskbar {
  display: flex;
  height: 50px;
  background: linear-gradient(90deg, #ede1d6, #efe2d7 50%, #f1e8dc 80%, #f2ece1);
  color: #111;
}

.start {
  width: 60px;
}

.search {
  display: flex;
  align-items: center;
  box-sizing: border-box;
  width: 360px;
  padding: 0 12px 0 14px;
  border: 1px solid #c9c7c6;
  background: #fff;
}

.search input {
  flex: 1;
  min-width: 0;
  padding: 0 0 0 13px;
  border: 0;
  outline: 0;
  background: none;
  font-size: 18px;
}

.search input::placeholder {
  color: #333;
  opacity: 1;
}

.taskview {
  width: 60px;
}

.apps {
  display: flex;
  gap: 1px;
  margin-left: 4px;
}

.app {
  display: flex;
  flex-direction: column;
  align-items: center;
  justify-content: center;
  position: relative;
  width: 61px;
  padding: 0;
  border: 0;
  background: none;
}

.app.running::after {
  content: '';
  position: absolute;
  right: 5px;
  bottom: 0;
  left: 5px;
  height: 3px;
  background: #0f78d0;
}

.app.active {
  background: #f8f3ef;
}

.app.active::after {
  right: 0;
  left: 0;
}

.tray {
  display: flex;
  margin-left: auto;
}

.weather {
  width: 32px;
  margin-right: 24px;
}

.tray-btn {
  width: 30px;
}

.clock {
  display: flex;
  flex-direction: column;
  align-items: center;
  justify-content: center;
  width: 94px;
  line-height: 23px;
}

.notes {
  width: 58px;
}

.copilot {
  width: 32px;
}

.peek {
  width: 5px;
  margin-left: 18px;
  border-left: 1px solid #b9b5ad;
}
</style>
